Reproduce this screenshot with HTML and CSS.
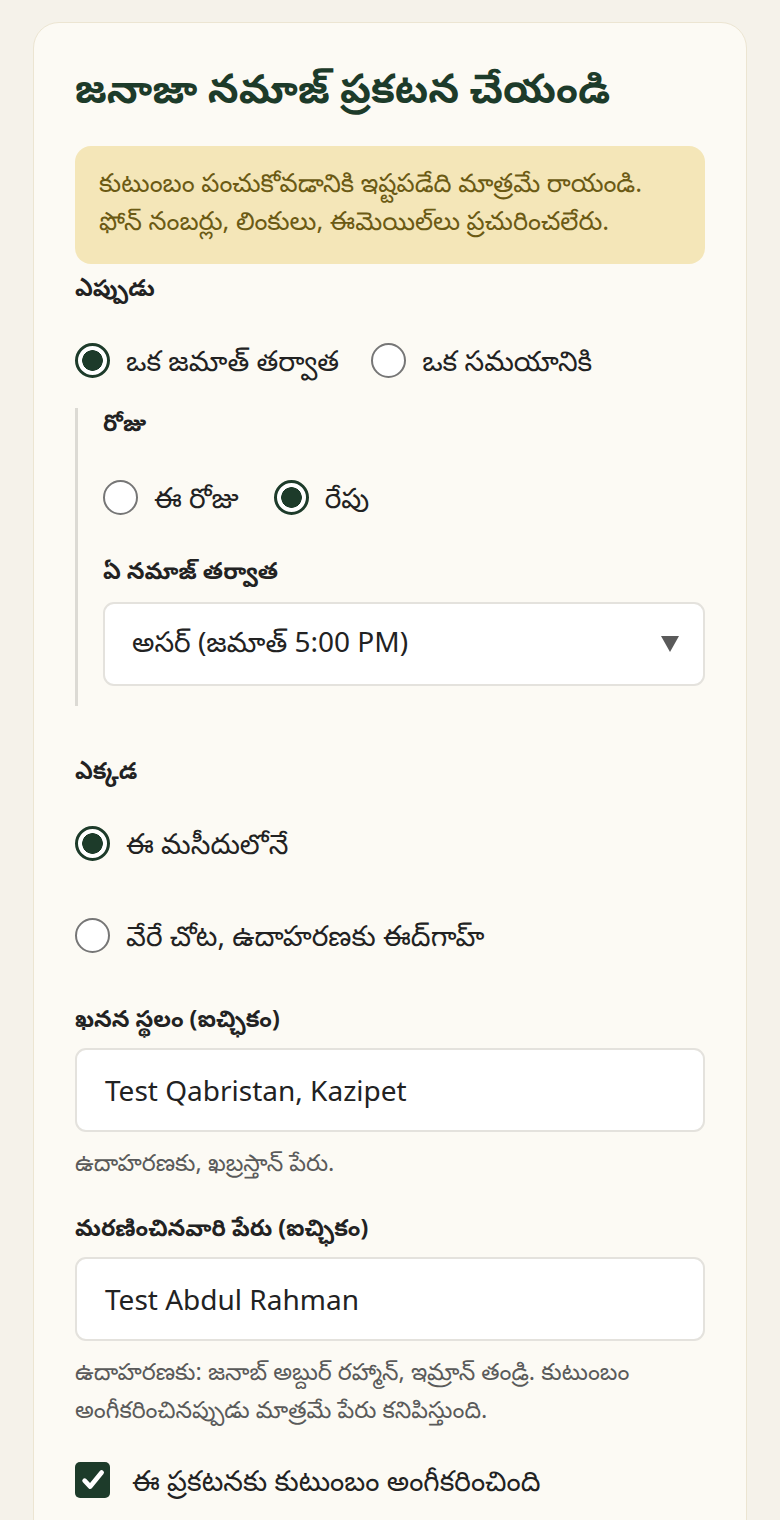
FILE: index.html
```html
<!DOCTYPE html>
<html lang="te">
<head>
<meta charset="utf-8">
<title>జనాజా నమాజ్ ప్రకటన చేయండి</title>
<link rel="stylesheet" href="styles.css">
</head>
<body>
<main class="card">
  <h1 class="title">జనాజా నమాజ్ ప్రకటన చేయండి</h1>
  <p class="notice">కుటుంబం పంచుకోవడానికి ఇష్టపడేది మాత్రమే రాయండి. ఫోన్ నంబర్లు, లింకులు, ఈమెయిల్‌లు ప్రచురించలేరు.</p>

  <section class="group when">
    <div class="label">ఎప్పుడు</div>
    <div class="radio-row">
      <label class="radio"><input type="radio" name="when" checked><span>ఒక జమాత్ తర్వాత</span></label>
      <label class="radio"><input type="radio" name="when"><span>ఒక సమయానికి</span></label>
    </div>
    <div class="indent">
      <div class="label">రోజు</div>
      <div class="radio-row">
        <label class="radio"><input type="radio" name="day"><span>ఈ రోజు</span></label>
        <label class="radio"><input type="radio" name="day" checked><span>రేపు</span></label>
      </div>
      <div class="label after">ఏ నమాజ్ తర్వాత</div>
      <div class="select">
        <span>అసర్ (జమాత్ 5:00 PM)</span>
        <svg class="caret" viewBox="0 0 18 16" width="18" height="16"><path d="M0 0H18L9 16Z" fill="#5a5a5a"/></svg>
      </div>
    </div>
  </section>

  <section class="group where">
    <div class="label">ఎక్కడ</div>
    <div class="radio-col">
      <label class="radio"><input type="radio" name="where" checked><span>ఈ మసీదులోనే</span></label>
      <label class="radio"><input type="radio" name="where"><span>వేరే చోట, ఉదాహరణకు ఈద్‌గాహ్</span></label>
    </div>
  </section>

  <section class="group burial">
    <div class="label">ఖనన స్థలం (ఐచ్ఛికం)</div>
    <div class="input">Test Qabristan, Kazipet</div>
    <div class="hint">ఉదాహరణకు, ఖబ్రస్తాన్ పేరు.</div>
  </section>

  <section class="group name">
    <div class="label">మరణించినవారి పేరు (ఐచ్ఛికం)</div>
    <div class="input">Test Abdul Rahman</div>
    <div class="hint">ఉదాహరణకు: జనాబ్ అబ్దుర్ రహ్మాన్, ఇమ్రాన్ తండ్రి. కుటుంబం అంగీకరించినప్పుడు మాత్రమే పేరు కనిపిస్తుంది.</div>
  </section>

  <label class="check">
    <span class="box"><svg viewBox="0 0 24 24" width="28" height="28"><path d="M4.8 12.6l4.8 5L19.4 5.6" fill="none" stroke="#fff" stroke-width="4" stroke-linecap="round" stroke-linejoin="round"/></svg></span>
    <span>ఈ ప్రకటనకు కుటుంబం అంగీకరించింది</span>
  </label>
</main>
</body>
</html>
```
FILE: styles.css
```css
* { box-sizing: border-box; }
html, body { margin: 0; padding: 0; }
body {
  background: #f5f2ea;
  font-family: "Noto Sans", "Noto Sans Telugu", sans-serif;
  color: #222;
  padding: 22px 33px 0;
}
.card {
  background: #fcfaf4;
  border: 1px solid #ece5d2;
  border-radius: 26px;
  padding: 37px 41px 40px;
  min-height: 1560px;
}
.title {
  margin: 0;
  font-size: 40px;
  font-weight: 700;
  color: #1d3b2a;
  line-height: 56px;
}
.notice {
  margin: 30px 0 0;
  background: #f4e6b8;
  color: #6b5a14;
  border-radius: 16px;
  padding: 18px 24px 25px;
  font-size: 25.5px;
  line-height: 37.5px;
}
.label {
  font-size: 23px;
  font-weight: 700;
  line-height: 28px;
  color: #222;
}
.when { margin-top: 9px; }
.radio-row {
  display: flex;
  gap: 32px;
  margin-top: 39px;
}
.radio {
  display: flex;
  align-items: center;
  gap: 16px;
  font-size: 28px;
  line-height: 40px;
  height: 40px;
}
.radio input {
  appearance: none;
  -webkit-appearance: none;
  margin: 0;
  width: 35px;
  height: 35px;
  border-radius: 50%;
  border: 2px solid #767676;
  background: #fff;
  flex: none;
}
.radio input:checked {
  border: 3px solid #1d3b2a;
  background: radial-gradient(circle, #1d3b2a 0 10px, #fff 10.6px);
}
.indent {
  border-left: 3px solid #dcdad4;
  padding: 0 0 20px 25px;
  margin-top: 28px;
}
.indent .radio-row { margin-top: 41px; gap: 35px; }
.label.after { margin-top: 39px; }
.select {
  display: flex;
  justify-content: space-between;
  align-items: center;
  background: #fff;
  border: 2px solid #e4e2dd;
  border-radius: 11px;
  height: 84px;
  padding: 0 24px 0 27px;
  font-size: 28px;
  margin-top: 18px;
  color: #222;
}
.caret { flex: none; }
.where { margin-top: 50px; }
.radio-col {
  display: flex;
  flex-direction: column;
  gap: 52px;
  margin-top: 39px;
}
.burial { margin-top: 49px; }
.name { margin-top: 32px; }
.input {
  background: #fff;
  border: 2px solid #e4e2dd;
  border-radius: 11px;
  height: 84px;
  display: flex;
  align-items: center;
  padding: 0 28px;
  font-size: 28px;
  margin-top: 16px;
  color: #222;
}
.hint {
  font-size: 23.5px;
  color: #5a5a5a;
  line-height: 38px;
  margin-top: 11px;
}
.check {
  display: flex;
  align-items: center;
  gap: 22px;
  font-size: 28px;
  line-height: 36px;
  margin-top: 34px;
}
.box {
  width: 35px;
  height: 36px;
  border-radius: 5px;
  background: #1d3b2a;
  display: flex;
  align-items: center;
  justify-content: center;
  flex: none;
}
```
